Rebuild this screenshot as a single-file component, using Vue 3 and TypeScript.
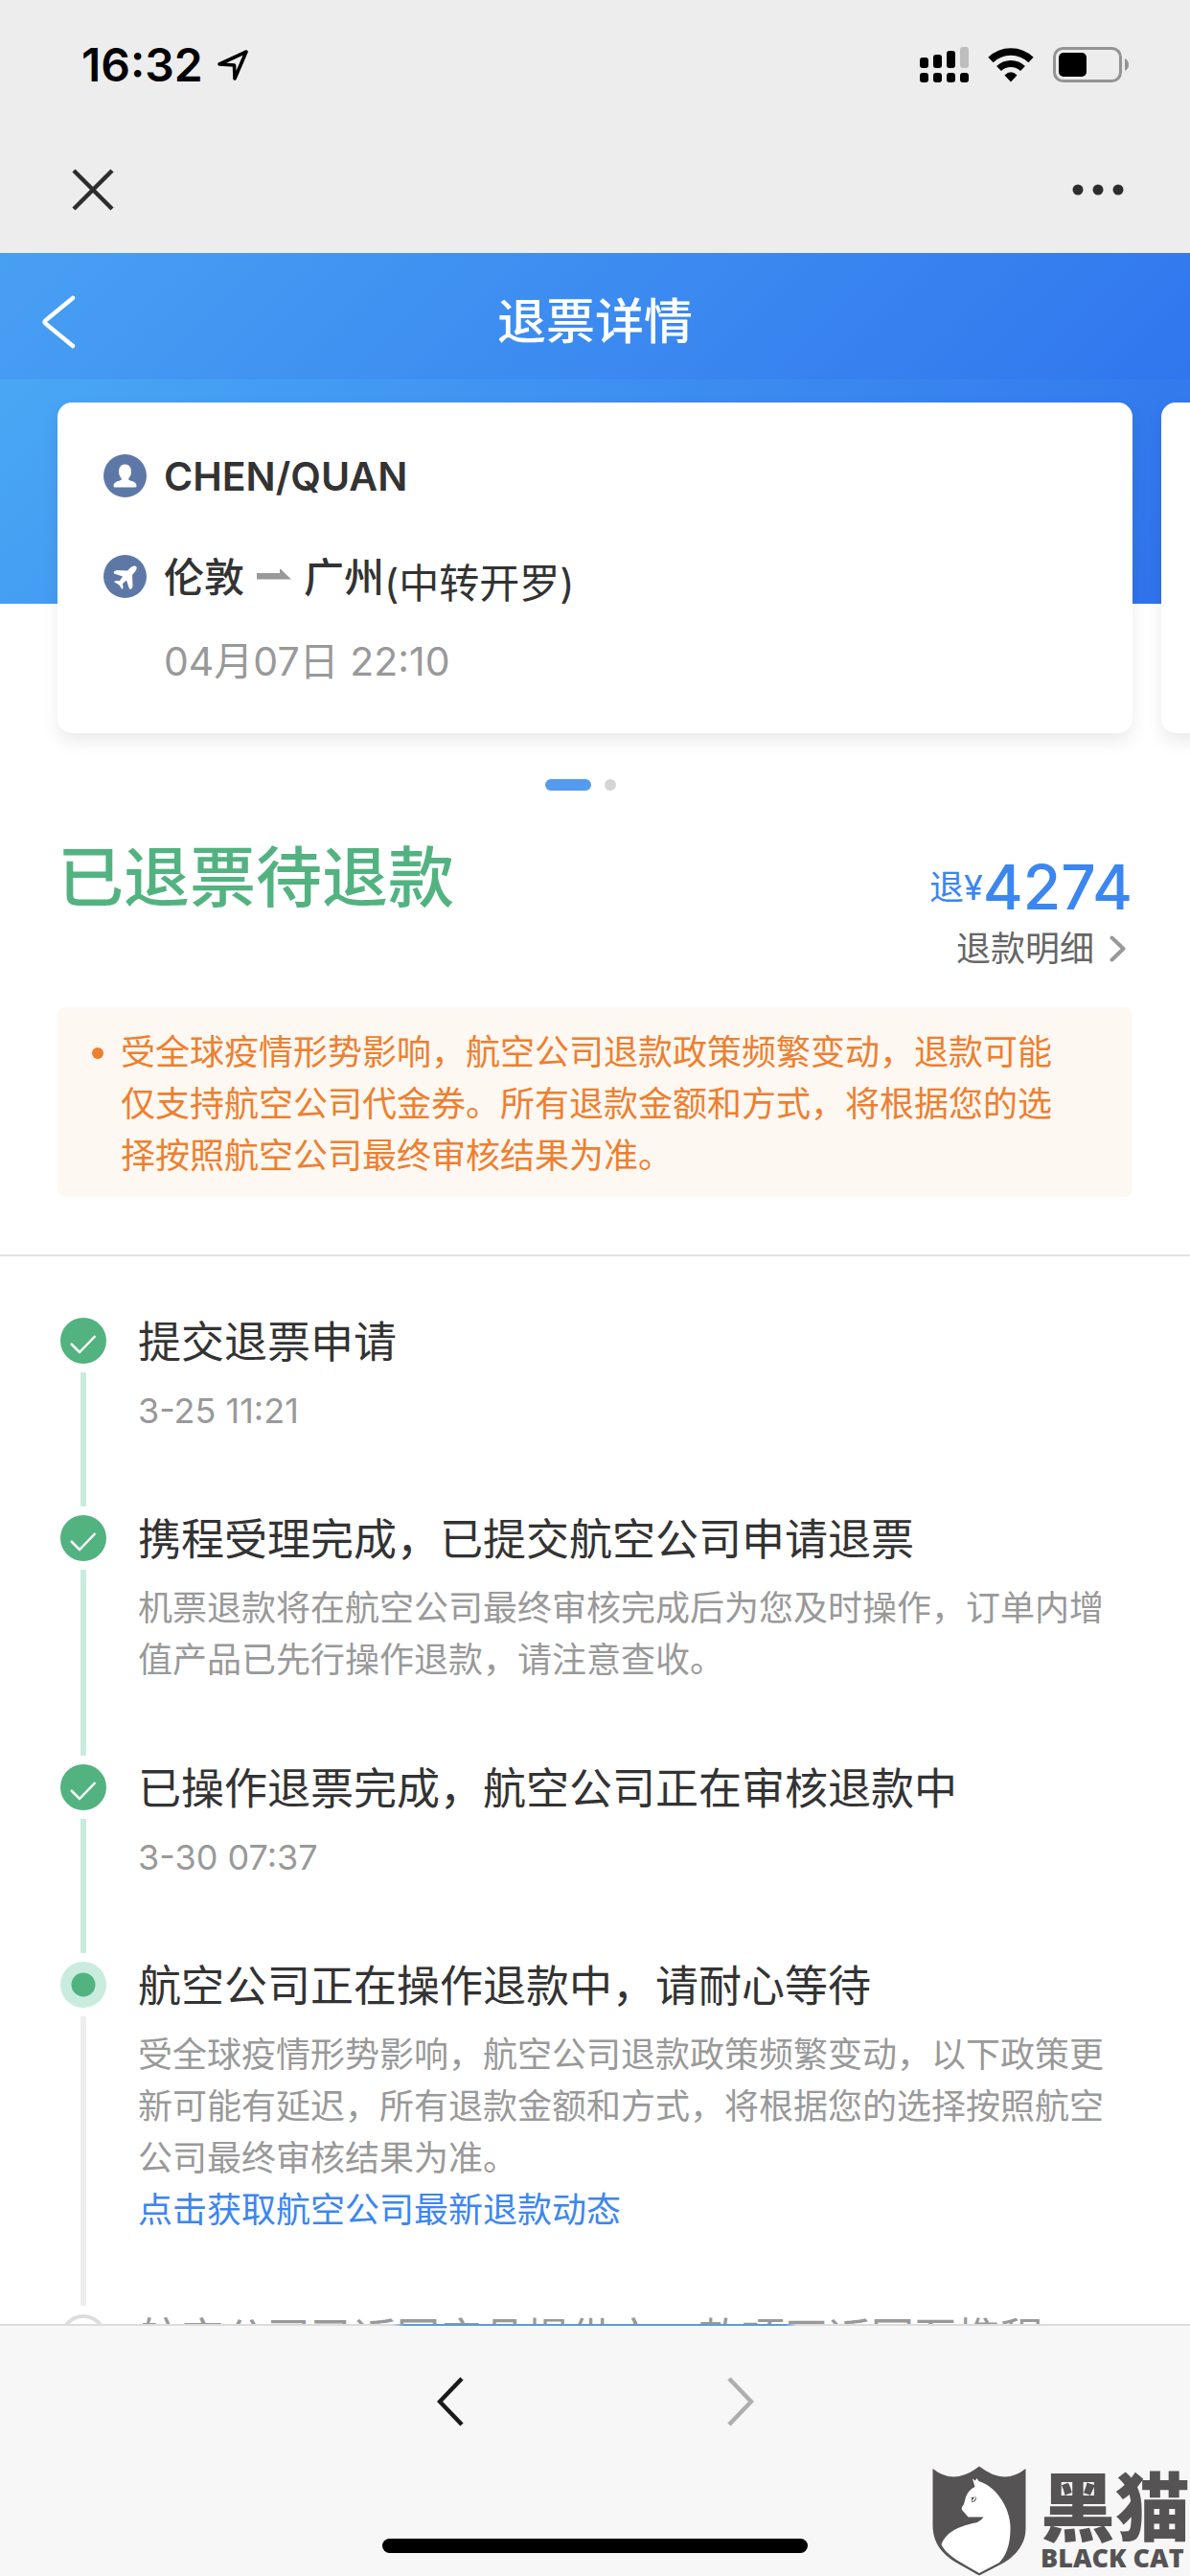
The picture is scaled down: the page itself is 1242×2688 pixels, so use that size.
<script setup lang="ts">
type StepState = 'done' | 'current' | 'pending'

interface Step {
  title: string
  state: StepState
  time?: string
  detail?: string
  link?: string
}

interface SignalBar {
  x: number
  top: number
  weak: boolean
}

const signalBars: SignalBar[] = [
  { x: 0, top: 11, weak: false },
  { x: 14, top: 8, weak: false },
  { x: 28, top: 4, weak: false },
  { x: 42, top: 0, weak: true },
]

const steps: Step[] = [
  { title: '提交退票申请', state: 'done', time: '3-25 11:21' },
  {
    title: '携程受理完成，已提交航空公司申请退票',
    state: 'done',
    detail: '机票退款将在航空公司最终审核完成后为您及时操作，订单内增值产品已先行操作退款，请注意查收。',
  },
  { title: '已操作退票完成，航空公司正在审核退款中', state: 'done', time: '3-30 07:37' },
  {
    title: '航空公司正在操作退款中，请耐心等待',
    state: 'current',
    detail: '受全球疫情形势影响，航空公司退款政策频繁变动，以下政策更新可能有延迟，所有退款金额和方式，将根据您的选择按照航空公司最终审核结果为准。',
    link: '点击获取航空公司最新退款动态',
  },
  { title: '航空公司已返回产品提供方，款项正返回至携程', state: 'pending' },
]

const notice =
  '受全球疫情形势影响，航空公司退款政策频繁变动，退款可能仅支持航空公司代金券。所有退款金额和方式，将根据您的选择按照航空公司最终审核结果为准。'
</script>

<template>
  <div class="screen">
    <div class="chrome">
      <div class="status">
        <div class="clock">
          <span>16:32</span>
          <svg width="34" height="34" viewBox="0 0 34 34" aria-hidden="true">
            <path d="M3 16 L31 3 L19 31 L18.500 17 Z" fill="none" stroke="#000" stroke-width="3.600" stroke-linejoin="round" />
          </svg>
        </div>
        <div class="indicators">
          <svg width="51" height="38" viewBox="0 0 51 38" aria-hidden="true">
            <g v-for="bar in signalBars" :key="bar.x">
              <rect :x="bar.x" :y="bar.top" width="9" :height="22 - bar.top" rx="3" :fill="bar.weak ? '#bebebe' : '#000'" />
              <rect :x="bar.x" y="27" width="9" height="10" rx="3" />
            </g>
          </svg>
          <svg class="wifi" width="48" height="36" viewBox="0 0 48 36" aria-hidden="true">
            <path d="M3 12.500 A30 30 0 0 1 45 12.500" fill="none" stroke="#000" stroke-width="7.500" />
            <path d="M11.500 21.500 A18 18 0 0 1 36.500 21.500" fill="none" stroke="#000" stroke-width="7" />
            <path d="M17.500 28.500 Q24 22 30.500 28.500 L24 35.500 Z" />
          </svg>
          <svg width="80" height="38" viewBox="0 0 80 38" aria-hidden="true">
            <rect x="1.500" y="1.500" width="69" height="34" rx="9" fill="none" stroke="#949494" stroke-width="3" />
            <rect x="6" y="6" width="29" height="25" rx="5" />
            <path d="M75 12 Q79 14 79 18.500 Q79 23 75 25 Z" fill="#949494" />
          </svg>
        </div>
      </div>
      <div class="toolbar">
        <button type="button" class="icon-button" aria-label="关闭">
          <svg width="44" height="44" viewBox="0 0 44 44"><path d="M2 2 L42 42 M42 2 L2 42" stroke="#2d2d2d" stroke-width="4.500" /></svg>
        </button>
        <button type="button" class="icon-button" aria-label="更多">
          <svg width="54" height="12" viewBox="0 0 54 12" fill="#2d2d2d">
            <circle cx="6" cy="6" r="5.500" /><circle cx="27" cy="6" r="5.500" /><circle cx="48" cy="6" r="5.500" />
          </svg>
        </button>
      </div>
    </div>

    <header class="title-bar">
      <button type="button" class="icon-button" aria-label="返回">
        <svg width="36" height="56" viewBox="0 0 36 56"><path d="M32 3 L4 26 Q1 28 4 30 L32 53" fill="none" stroke="#fff" stroke-width="4.500" stroke-linecap="round" /></svg>
      </button>
      <h1>退票详情</h1>
    </header>

    <main class="content">
      <section class="carousel">
        <article class="card">
          <div class="card-row">
            <svg width="45" height="45" viewBox="0 0 45 45" aria-hidden="true">
              <circle cx="22.500" cy="22.500" r="22.500" fill="#5d78a7" />
              <path d="M22.500 10.500 C26.500 10.500 29 13.500 29 18 C29 21.500 27.500 24 26 25.500 Q26 27 28 27.500 C32 28.500 34.500 30 34.500 33 Q34.500 34.500 33 34.500 H12 Q10.500 34.500 10.500 33 C10.500 30 13 28.500 17 27.500 Q19 27 19 25.500 C17.500 24 16 21.500 16 18 C16 13.500 18.500 10.500 22.500 10.500 Z" fill="#fff" />
            </svg>
            <strong class="passenger">CHEN/QUAN</strong>
          </div>
          <div class="card-row">
            <svg width="45" height="45" viewBox="0 0 45 45" aria-hidden="true">
              <circle cx="22.500" cy="22.500" r="22.500" fill="#5d78a7" />
              <path d="M34 12 C35.500 13.500 34.500 16 32.500 18 L30 21 L30.500 33 Q29.500 36 28 36 Q27 36 26.500 34 L24 26.500 L20 30 L20.500 34.500 Q20 36 19 35.500 L16.500 31.500 L11.500 28.500 Q11 27 12.500 27 L17 27 L20 22.500 L11 19.500 Q10 18.500 11.500 17 L14 16 L25 16.500 L28.500 13 C30.500 11.500 33 11 34 12 Z" fill="#fff" />
            </svg>
            <div class="route">
              <span class="city">伦敦</span>
              <svg width="36" height="12" viewBox="0 0 36 12" aria-label="至"><path d="M0 4 H24 V-1 L36 10.500 H0 Z" fill="#999" /></svg>
              <span class="city">广州</span>
              <span class="via">(中转开罗)</span>
            </div>
          </div>
          <time class="departure">04月07日 22:10</time>
        </article>
        <article class="card" aria-hidden="true"></article>
      </section>

      <div class="pager"><span class="pager-active"></span><span class="pager-dot"></span></div>

      <section class="summary">
        <div class="summary-head">
          <h2>已退票待退款</h2>
          <div class="refund">
            <div class="price"><span>退¥</span><strong>4274</strong></div>
            <a class="more" href="#">
              退款明细
              <svg width="18" height="28" viewBox="0 0 18 28" aria-hidden="true"><path d="M2.500 2.500 L14.500 14 L2.500 25.500" fill="none" stroke="#999" stroke-width="4" stroke-linecap="round" stroke-linejoin="round" /></svg>
            </a>
          </div>
        </div>
        <div class="notice">
          <span class="bullet"></span>
          <p>{{ notice }}</p>
        </div>
      </section>

      <ol class="timeline">
        <li v-for="step in steps" :key="step.title" class="step" :class="step.state">
          <div class="rail">
            <svg width="48" height="48" viewBox="0 0 48 48" aria-hidden="true">
              <template v-if="step.state === 'done'">
                <circle cx="24" cy="24" r="24" fill="#52b381" />
                <path d="M11 27 L20 36 L36.500 19" fill="none" stroke="#fff" stroke-width="2.500" />
              </template>
              <template v-else-if="step.state === 'current'">
                <circle cx="24" cy="24" r="24" fill="#c9ecdf" />
                <circle cx="24" cy="24" r="12.500" fill="#52b381" />
              </template>
              <circle v-else cx="24" cy="24" r="22" fill="none" stroke="#ddd" stroke-width="4" />
            </svg>
            <span class="line"></span>
          </div>
          <div class="step-body">
            <h3>{{ step.title }}</h3>
            <time v-if="step.time">{{ step.time }}</time>
            <p v-if="step.detail">{{ step.detail }}</p>
            <a v-if="step.link" href="#">{{ step.link }}</a>
          </div>
        </li>
      </ol>
    </main>

    <footer class="browser-bar">
      <div class="progress"></div>
      <nav class="history">
        <button type="button" class="icon-button" aria-label="后退">
          <svg width="28" height="52" viewBox="0 0 28 52"><path d="M26 2 L3 26 L26 50" fill="none" stroke="#1a1a1a" stroke-width="4.500" /></svg>
        </button>
        <button type="button" class="icon-button" aria-label="前进">
          <svg width="28" height="52" viewBox="0 0 28 52"><path d="M2 2 L25 26 L2 50" fill="none" stroke="#aeaeae" stroke-width="4.500" /></svg>
        </button>
      </nav>
      <div class="home-indicator"></div>
      <div class="brand">
        <svg width="98" height="115" viewBox="0 0 98 115" aria-hidden="true">
          <path d="M0.500 3 Q23 21 49 0.500 Q75 21 97.500 3 V66 C97.500 82 86 95 74 101.500 L49 114.500 L25 101 C10 92 0.500 80 0.500 62 Z" fill="#565354" />
          <path d="M42 13.500 L45 15.500 L46.500 13 L48.500 16 C66 21 81 43 81.500 63 C82 82 77 94 70 101 L49 112 L25 98 C18 93 12 88 9.500 82 C15 67 32 62 47 59 Q52 56 53.500 53.500 L37.500 53.500 L31 46 Q30 43 32.500 41 C35 36 34 27 44.500 22 Z" fill="#fff" />
          <path d="M41 33 Q46 32 46 33 Q46 38 41 38 Z" fill="#565354" />
          <path d="M42 37 L45 33" stroke="#fff" stroke-width="1.500" />
        </svg>
        <div class="brand-text">
          <span class="brand-zh">黑猫</span>
          <span class="brand-en">BLACK CAT</span>
        </div>
      </div>
    </footer>
  </div>
</template>

<style>
body {
  margin: 0;
}
</style>

<style scoped>
.screen {
  display: flex;
  flex-direction: column;
  height: 100vh;
  overflow: hidden;
  background: #fff;
  color: #333;
  font-family: Inter, "Noto Sans CJK SC", sans-serif;
  font-size: 36px;
  line-height: 54px;
}

h1,
h2,
h3,
p,
ol {
  margin: 0;
  padding: 0;
  font-weight: 400;
}

svg {
  display: block;
  flex: none;
}

a {
  text-decoration: none;
}

.icon-button {
  display: flex;
  align-items: center;
  padding: 0;
  border: 0;
  background: none;
}

.chrome {
  flex: none;
  background: #ededed;
}

.status {
  display: flex;
  justify-content: space-between;
  align-items: center;
  height: 132px;
  box-sizing: border-box;
  padding: 4px 63px 0 85px;
}

.clock {
  display: flex;
  align-items: center;
  gap: 14px;
  color: #000;
  font-size: 48px;
  font-weight: 600;
}

.indicators {
  display: flex;
  align-items: center;
  gap: 20px;
}

.toolbar {
  display: flex;
  justify-content: space-between;
  align-items: center;
  height: 132px;
  padding: 0 69px 0 75px;
}

.title-bar {
  display: grid;
  grid-template-columns: 1fr auto 1fr;
  align-items: center;
  flex: none;
  height: 132px;
  padding: 12px 44px 0;
  box-sizing: border-box;
  background: linear-gradient(135deg, #48a0f3, #3076ee);
}

.title-bar h1 {
  color: #fff;
  font-size: 51px;
  font-weight: 500;
  line-height: 60px;
}

.content {
  flex: 1;
  min-height: 0;
  overflow: hidden;
}

.carousel {
  display: flex;
  gap: 30px;
  padding: 24px 60px 48px;
  overflow: hidden;
  background: linear-gradient(135deg, #49a7f4, #2f72ec) no-repeat;
  background-size: 100% 234px;
}

.card {
  flex: 0 0 100%;
  box-sizing: border-box;
  padding: 54px 48px 48px;
  border-radius: 15px;
  background: #fff;
  box-shadow: 0 9px 18px rgba(0, 0, 0, 0.08);
}

.card-row {
  display: flex;
  align-items: center;
  gap: 18px;
  height: 45px;
  margin-bottom: 60px;
}

.passenger {
  font-size: 41px;
  font-weight: 600;
}

.route {
  display: flex;
  align-items: center;
  padding-top: 2px;
  font-size: 42px;
}

.route svg {
  margin: 0 13px 6px;
}

.city {
  font-weight: 500;
}

.via {
  padding-top: 12px;
}

.departure {
  display: block;
  margin-top: -21px;
  padding-left: 63px;
  color: #999;
  font-size: 41px;
}

.pager {
  display: flex;
  justify-content: center;
  gap: 14px;
  padding-right: 30px;
}

.pager-active {
  width: 48px;
  height: 12px;
  border-radius: 6px;
  background: #549bf0;
}

.pager-dot {
  width: 12px;
  height: 12px;
  border-radius: 50%;
  background: #d5d5d5;
}

.summary {
  padding: 48px 60px 60px;
  border-bottom: 2px solid #e2e2e2;
}

.summary-head {
  display: flex;
  justify-content: space-between;
  margin-bottom: 34px;
}

.summary-head h2 {
  color: #52b381;
  font-size: 69px;
  font-weight: 500;
  line-height: 86px;
}

.refund {
  display: flex;
  flex-direction: column;
  align-items: flex-end;
  padding-top: 16px;
}

.price {
  display: flex;
  align-items: center;
  height: 74px;
  color: #3b86f0;
}

.price strong {
  font-size: 64px;
  font-weight: 500;
}

.more {
  display: flex;
  align-items: center;
  gap: 16px;
  padding-right: 6px;
  color: #666;
}

.notice {
  display: flex;
  gap: 18px;
  padding: 20px 60px 16px 36px;
  border-radius: 9px;
  background: #fdf8f2;
  color: #ee7f2f;
}

.bullet {
  flex: none;
  width: 12px;
  height: 12px;
  margin-top: 22px;
  border-radius: 50%;
  background: #ee7f2f;
}

.timeline {
  padding: 64px 60px 0 63px;
  list-style: none;
}

.step {
  display: flex;
  gap: 33px;
}

.rail {
  display: flex;
  flex-direction: column;
  align-items: center;
  gap: 9px;
  padding-bottom: 9px;
}

.line {
  flex: 1;
  width: 6px;
  background: #c9ecdf;
}

.current .line,
.pending .line {
  background: #eee;
}

.step-body {
  flex: 1;
  padding: 2px 0 82px;
  color: #999;
}

.step-body h3 {
  margin-bottom: 20px;
  color: #333;
  font-size: 45px;
  line-height: 48px;
}

.pending h3 {
  color: #999;
}

.step-body time,
.step-body a {
  display: block;
}

.step-body a {
  color: #3b86f0;
}

.browser-bar {
  position: relative;
  display: flex;
  flex-direction: column;
  align-items: center;
  flex: none;
  background: #f7f7f7;
}

.progress {
  width: 100%;
  height: 2px;
  background: linear-gradient(90deg, #ddd 33%, #5b9bd8 34%, #5b9bd8 66%, #ddd 67%);
}

.history {
  display: flex;
  justify-content: center;
  gap: 275px;
  padding: 53px 0 117px;
}

.home-indicator {
  width: 444px;
  height: 15px;
  margin-bottom: 24px;
  border-radius: 8px;
  background: #000;
}

.brand {
  position: absolute;
  right: 0;
  bottom: 0;
  display: flex;
  align-items: flex-end;
  gap: 15px;
  color: #565354;
}

.brand-text {
  display: flex;
  flex-direction: column;
}

.brand-zh {
  font-family: "Noto Sans CJK SC", sans-serif;
  font-size: 78px;
  font-weight: 900;
  line-height: 76px;
}

.brand-en {
  font-family: "Open Sans", sans-serif;
  font-size: 27px;
  font-weight: 800;
  line-height: 38px;
}
</style>
